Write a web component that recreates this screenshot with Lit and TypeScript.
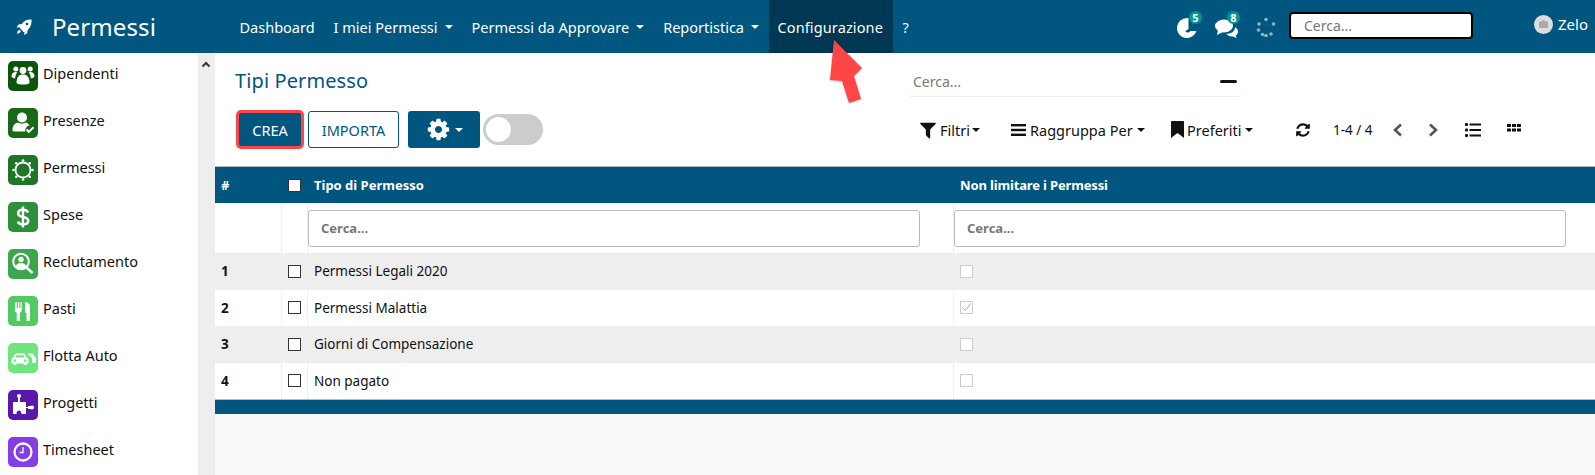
import { LitElement, html, css, svg } from "lit";
import { customElement } from "lit/decorators.js";

const FA = {
  cog: "M1152 896q0-106-75-181t-181-75-181 75-75 181 75 181 181 75 181-75 75-181zm512-109v222q0 12-8 23t-20 13l-185 28q-19 54-39 91 35 50 107 138 10 12 10 25t-9 23q-27 37-99 108t-94 71q-12 0-26-9l-138-108q-44 23-91 38-16 136-29 186-7 28-36 28h-222q-14 0-24.5-8.5t-11.5-21.5l-28-184q-49-16-90-37l-141 107q-10 9-25 9-14 0-25-11-126-114-165-168-7-10-7-23 0-12 8-23 15-21 51-66.5t54-70.5q-27-50-41-99l-183-27q-13-2-21-12.5t-8-23.5v-222q0-12 8-23t19-13l186-28q14-46 39-92-40-57-107-138-10-12-10-24 0-10 9-23 26-36 98.5-107.5t94.5-71.5q13 0 26 10l138 107q44-23 91-38 16-136 29-186 7-28 36-28h222q14 0 24.5 8.5t11.5 21.5l28 184q49 16 90 37l142-107q9-9 24-9 13 0 25 10 129 119 165 170 7 8 7 22 0 12-8 23-15 21-51 66.5t-54 70.5q26 50 41 98l183 28q13 2 21 12.5t8 23.5z",
  filter: "M1595 295q17 41-14 70l-493 493v742q0 42-39 59-13 5-25 5-27 0-45-19l-256-256q-19-19-19-45v-486l-493-493q-31-29-14-70 17-39 59-39h1280q42 0 59 39z",
  refresh: "M1639 1056q0 5-1 7-64 268-268 434.5t-478 166.5q-146 0-282.5-55t-243.5-157l-129 129q-19 19-45 19t-45-19-19-45v-448q0-26 19-45t45-19h448q26 0 45 19t19 45-19 45l-137 137q71 66 161 102t187 36q134 0 250-65t186-179q11-17 53-117 8-23 30-23h192q13 0 22.5 9.5t9.5 22.5zm25-800v448q0 26-19 45t-45 19h-448q-26 0-45-19t-19-45 19-45l138-138q-148-137-349-137-134 0-250 65t-186 179q-11 17-53 117-8 23-30 23h-199q-13 0-22.5-9.5t-9.5-22.5v-7q65-268 270-434.5t480-166.5q146 0 284 55.5t245 156.5l130-129q19-19 45-19t45 19 19 45z",
};

const fa = (d: string, size: number, cls = "") => html`<svg class=${cls} width=${size} height=${size} viewBox="0 0 1792 1792" fill="currentColor"><path d=${d}></path></svg>`;

const appIcons: Record<string, unknown> = {
  people: svg`<circle cx="15" cy="9.500" r="3.400"/><circle cx="7.800" cy="8" r="2.500"/><circle cx="22.200" cy="8" r="2.500"/><path d="M8.500 22c0-6 2.500-8.500 6.500-8.500s6.500 2.500 6.500 8.500c-2 2-11 2-13 0z"/><path d="M3.500 15.500c0-3 1.500-4.500 4-4.500 .8 0 1.500.3 2 .6-1.500 1.300-2.200 3-2.300 6-1.500-.2-2.900-1-3.700-2.100zM26.500 15.500c0-3-1.500-4.500-4-4.500-.8 0-1.500.3-2 .6 1.500 1.300 2.200 3 2.300 6 1.500-.2 2.900-1 3.700-2.100z"/>`,
  user: svg`<circle cx="14" cy="9.500" r="5"/><path d="M4.500 22.500c0-5 2-7 5-8 2.500 1.500 6 1.500 8.500 0 1.500.6 2.800 1.500 3.600 2.800-3 .6-4.600 3-4.600 6.200H7c-1.500 0-2.500-.4-2.500-1z"/><path d="M18.500 21.500l2.300 2.400 4.700-4.700" fill="none" stroke="#fff" stroke-width="2"/>`,
  sun: svg`<circle cx="15" cy="15" r="7.500" fill="none" stroke="#fff" stroke-width="1.800"/><g><circle cx="15" cy="5.500" r="1.300"/><circle cx="15" cy="24.500" r="1.300"/><circle cx="5.500" cy="15" r="1.300"/><circle cx="24.500" cy="15" r="1.300"/><circle cx="8.300" cy="8.300" r="1.300"/><circle cx="21.700" cy="8.300" r="1.300"/><circle cx="8.300" cy="21.700" r="1.300"/><circle cx="21.700" cy="21.700" r="1.300"/></g>`,
  dollar: svg`<path d="M20 10.500c-.8-1.800-2.600-2.700-5-2.700-2.900 0-4.800 1.400-4.800 3.600 0 5 10 2.400 10 7.400 0 2.300-2.100 3.600-5.100 3.600-2.600 0-4.500-1-5.300-3" fill="none" stroke="#fff" stroke-width="2.600"/><rect x="13.800" y="4.500" width="2.400" height="21"/>`,
  search: svg`<circle cx="13" cy="12.500" r="7.800" fill="none" stroke="#fff" stroke-width="2"/><circle cx="13" cy="10.500" r="2.700"/><path d="M7.800 17.500c.6-2.700 2.700-3.500 5.200-3.500s4.600.8 5.200 3.500c-2.600 2-7.800 2-10.400 0z"/><path d="M18.500 18.500l6 5.500" stroke="#fff" stroke-width="2.400" fill="none"/>`,
  cutlery: svg`<path d="M7.500 6h1.300v6h1.200V6h1.300v6h1.200V6h1.300v8c0 1.300-.9 2.300-2 2.700V25h-3V16.700c-1.100-.4-2-1.400-2-2.700z"/><path d="M17 6c3 0 5 2 5 5v14h-3.500v-8H17z"/>`,
  cars: svg`<path d="M3.500 20.500v-3.500c0-1.200.7-2 1.700-2.300l1.500-3c.4-.8 1-1.200 2-1.200h6.600c1 0 1.600.4 2 1.200l1.500 3c1 .3 1.700 1.100 1.700 2.300v3.500h-2v1.500h-2.800v-1.500H8.300v1.500H5.500v-1.500z"/><path d="M19.500 10.500h4.300c.8 0 1.300.3 1.700 1l1 2.300c.8.300 1.500 1 1.500 2v3.700h-1.500V20h-2.200v-3.500c0-2-1.200-3-2.300-3.300z"/><rect x="7.800" y="12.300" width="8.400" height="2.200" fill="var(--c)"/><circle cx="6.800" cy="17.500" r="1.200" fill="var(--c)"/><circle cx="17.200" cy="17.500" r="1.200" fill="var(--c)"/>`,
  puzzle: svg`<circle cx="11" cy="6" r="2"/><rect x="10" y="7" width="2" height="5"/><path d="M5 12h13v5h2v-1h3v3h-3v-1h-2v6h-4.500c0-2.500-1.200-3.500-2.500-3.500S8.500 21.500 8.500 24H5z"/><circle cx="24" cy="17.500" r="2"/>`,
  clock: svg`<circle cx="15" cy="15" r="8.500" fill="none" stroke="#fff" stroke-width="2.300"/><path d="M15 10v5.500h-3.500" fill="none" stroke="#fff" stroke-width="1.300"/>`,
};

const apps = [
  { name: "Dipendenti", color: "#0c540c", icon: "people" },
  { name: "Presenze", color: "#186a18", icon: "user" },
  { name: "Permessi", color: "#1f7528", icon: "sun" },
  { name: "Spese", color: "#2c8f39", icon: "dollar" },
  { name: "Reclutamento", color: "#3da64d", icon: "search" },
  { name: "Pasti", color: "#52ca63", icon: "cutlery" },
  { name: "Flotta Auto", color: "#6ee57f", icon: "cars" },
  { name: "Progetti", color: "#5619ab", icon: "puzzle" },
  { name: "Timesheet", color: "#863ce6", icon: "clock" },
];

const rows = [
  { n: 1, name: "Permessi Legali 2020", on: false },
  { n: 2, name: "Permessi Malattia", on: true },
  { n: 3, name: "Giorni di Compensazione", on: false },
  { n: 4, name: "Non pagato", on: false },
];

@customElement("app-root")
export class AppRoot extends LitElement {
  static styles = css`
    :host { display: block; width: 1595px; height: 475px; overflow: hidden; position: relative; font-family: "Noto Sans", "Liberation Sans", sans-serif; font-size: 14.5px; color: #111; background: #fff; }
    * { box-sizing: border-box; }
    svg { display: block; flex: none; }

    .top { height: 53px; background: #00567f; color: #fff; display: flex; align-items: stretch; position: relative; }
    .rocket { width: 52px; display: flex; align-items: center; padding-left: 16px; }
    .brand { font-size: 24px; width: 178px; display: flex; align-items: center; letter-spacing: .1px; }
    .nav { display: flex; align-items: stretch; }
    .nav a { display: flex; align-items: center; gap: 7px; padding: 0 9.500px; white-space: nowrap; }
    .nav a.active { background: #003752; letter-spacing: .12px; padding: 0 9.500px 0 9px; }
    .nav a.last { padding-left: 10px; }
    .caret { width: 0; height: 0; border-left: 4px solid transparent; border-right: 4px solid transparent; border-top: 4px solid currentColor; display: inline-block; flex: none; }
    .sys { margin-left: auto; display: flex; align-items: center; }
    .notify { position: relative; width: 22px; height: 22px; }
    .bubble { position: absolute; top: -7px; right: -3px; width: 13px; height: 13px; border-radius: 50%; background: #00968f; color: #fff; font-size: 11px; font-weight: 700; line-height: 13px; text-align: center; }
    .n1 { margin-right: 16px; margin-top: 5px; }
    .n2 { margin-right: 19px; margin-top: 5px; }
    .spin { margin-right: 13px; }
    .topsearch { width: 184px; height: 27px; border: 2px solid #000; border-radius: 4px; background: #fff; color: #777; font-size: 14px; padding-left: 13px; display: flex; align-items: center; margin-right: 61px; margin-top: -3px; }
    .avatar { width: 19px; height: 19px; border-radius: 50%; background: #ddd; display: flex; align-items: center; justify-content: center; margin-right: 5px; margin-top: -5px; }
    .who { width: 37px; margin-top: -5px; font-size: 15px; }

    .body { display: flex; height: 422px; }
    .side { width: 198px; padding: 8px 8px 0; display: flex; flex-direction: column; gap: 17px; overflow: hidden; }
    .app { display: flex; align-items: flex-start; gap: 5px; height: 30px; flex: none; }
    .tile { width: 30px; height: 30px; border-radius: 5px; flex: none; color: #fff; }
    .app span { line-height: 25px; }
    .track { width: 17px; background: #eee; padding: 8px 0 0 3px; color: #333; }

    .main { flex: 1; min-width: 0; background: #f9f9f9; display: flex; flex-direction: column; }
    .panel { background: #fff; height: 114px; display: grid; grid-template-columns: 693px 1fr; grid-template-rows: 53px 1fr; border-bottom: 1px solid #bbb; }
    .title { font-size: 20px; color: #00567f; padding: 14px 0 0 20px; letter-spacing: .1px; }
    .srch { margin-top: 14px; width: 334px; height: 30px; border-bottom: 1px solid #eee; border-radius: 0 0 4px 4px; color: #777; font-size: 14px; padding: 0 5px; display: flex; align-items: center; justify-content: space-between; }
    .minus { width: 17px; height: 3px; border-radius: 2px; background: #111; }
    .left { padding: 4px 0 0 21px; display: flex; align-items: flex-start; }
    .btn { display: flex; align-items: center; justify-content: center; border-radius: 3px; height: 37px; margin-top: 1px; }
    .crea { width: 68px; height: 39px; margin-top: 0; background: #00567f; color: #fff; border: 3px solid #ff4545; border-radius: 5px; margin-right: 4px; }
    .imp { width: 91px; background: #fff; color: #00567f; border: 1px solid #00567f; margin-right: 9px; }
    .gear { width: 72px; background: #00567f; color: #fff; gap: 4px; margin-right: 3px; }
    .toggle { width: 60px; height: 31px; border-radius: 16px; background: #ccc; margin-top: 4px; padding: 3px; }
    .toggle i { display: block; width: 25px; height: 25px; border-radius: 50%; background: #fff; }
    .right { display: flex; align-items: center; padding: 0 0 0 10px; height: 37px; margin-top: 5px; }
    .tool { display: flex; align-items: center; gap: 4px; white-space: nowrap; }
    .t1 { width: 93px; gap: 2px; } .t2 { width: 160px; } .t3 { width: 124px; gap: 3px; }
    .pager { width: 38px; }
    .count { width: 59px; font-size: 13.500px; }
    .ch1 { width: 36px; color: #555; }
    .ch2 { width: 37px; color: #555; }
    .vw { width: 42px; }

    .grid { display: grid; grid-template-columns: 66px 26px 646px 1fr; }
    .c { display: flex; align-items: center; padding-left: 7px; }
    .head { height: 36px; background: #00567f; color: #fff; font-weight: 700; font-size: 13px; }
    .head .c:first-child { padding-left: 6px; }
    .wide { letter-spacing: -.15px; }
    .filter { height: 50px; background: #fff; }
    .filter .c { border-left: 1px solid #eee; padding: 0; }
    .filter .c:first-child { border: 0; }
    .field { height: 37px; border: 1px solid #bbb; border-radius: 3px; background: #fff; color: #777; font-weight: 700; font-size: 13px; display: flex; align-items: center; padding-left: 12px; }
    .f1 { width: 612px; } .f2 { width: 612px; }
    .row { height: 36.500px; background: #fff; font-size: 13.500px; }
    .row .c { border-left: 1px solid #eee; padding-left: 6px; }
    .row .c:first-child { border: 0; font-weight: 700; padding-left: 6px; }
    .stripe .c { background: #eee; }
    .box { width: 13px; height: 13px; border: 1px solid #333; background: #fff; display: block; }
    .dis { border: 1px solid #ccc; display: flex; align-items: center; justify-content: center; }
    .foot { height: 15px; background: #00567f; border-top: 1px solid #bbb; }
    .arrow { position: absolute; left: 826px; top: 40px; filter: drop-shadow(0 1px 1px rgba(0,0,0,.2)); }
  `;

  render() {
    return html`
      <div class="top">
        <div class="rocket"><svg width="16" height="16" viewBox="0 0 16 16" fill="#fff"><path d="M15.500.6C11.300.4 8 1.800 5.700 5L2.600 5.500.5 8.500l3.300-.3 0 .9 3.800 3.800.9 0-.3 3.300 3-2.100.5-3.100C14.400 8.700 15.800 5 15.500.6zM11 6.300a1.300 1.300 0 1 1 0-2.600 1.300 1.300 0 0 1 0 2.600zM3.300 10.800c-1.300.8-2 2-2.300 3.900 1.900-.3 3.100-1 3.900-2.300z"/></svg></div>
        <div class="brand">Permessi</div>
        <div class="nav">
          <a>Dashboard</a>
          <a>I miei Permessi <i class="caret"></i></a>
          <a>Permessi da Approvare <i class="caret"></i></a>
          <a>Reportistica <i class="caret"></i></a>
          <a class="active">Configurazione</a>
          <a class="last">?</a>
        </div>
        <div class="sys">
          <div class="notify n1">
            <svg width="20" height="20" viewBox="0 0 20 20" fill="#fff"><path d="M10 0a10 10 0 1 0 9.500 13H13.500a3.500 3.500 0 0 1-3.500 1.500 2 2 0 0 1-1.500-1.500L11.500 11V0z"/></svg>
            <span class="bubble">5</span>
          </div>
          <div class="notify n2">
            <svg width="23" height="20" viewBox="0 0 23 20" fill="#fff"><ellipse cx="9" cy="8" rx="9" ry="6.500"/><path d="M3 12l-1 5 6-3z"/><path d="M11.500 15.800c4.500.2 8.500-2.500 8.500-6.500 2 1 3 2.500 3 4.200 0 2-1 3.300-2.300 4.200l1 2.300-4-1.500c-2.500.3-5-.8-6.200-2.700z"/></svg>
            <span class="bubble">8</span>
          </div>
          <svg class="spin" width="20" height="20" viewBox="0 0 20 20" fill="#8fb4c6"><circle cx="10" cy="2.500" r="1.800"/><circle cx="3" cy="7" r="1.800"/><circle cx="17.500" cy="7" r="1.800"/><circle cx="2.500" cy="13" r="1.800"/><circle cx="6.500" cy="17.500" r="1.800"/><circle cx="10" cy="18.500" r="1.800"/><circle cx="15" cy="17" r="1.800"/></svg>
          <div class="topsearch">Cerca...</div>
          <div class="avatar"><svg width="9" height="8" viewBox="0 0 9 8" fill="#aaa"><path d="M0 1.500h2.500L3.300.3h2.400l.8 1.200H9V8H0z"/></svg></div>
          <div class="who">Zelo</div>
        </div>
      </div>
      <div class="body">
        <div class="side">
          ${apps.map(a => html`<div class="app"><svg class="tile" viewBox="0 0 30 30" fill="#fff" style="background:${a.color};--c:${a.color}">${appIcons[a.icon]}</svg><span>${a.name}</span></div>`)}
        </div>
        <div class="track"><svg width="10" height="7" viewBox="0 0 10 7" fill="none" stroke="#333" stroke-width="2"><path d="M1.500 5.500L5 2l3.500 3.500"/></svg></div>
        <div class="main">
          <div class="panel">
            <div class="title">Tipi Permesso</div>
            <div><div class="srch"><span>Cerca...</span><i class="minus"></i></div></div>
            <div class="left">
              <div class="btn crea">CREA</div>
              <div class="btn imp">IMPORTA</div>
              <div class="btn gear">${fa(FA.cog, 25)}<i class="caret"></i></div>
              <div class="toggle"><i></i></div>
            </div>
            <div class="right">
              <div class="tool t1">${fa(FA.filter, 20)}<span>Filtri</span><i class="caret"></i></div>
              <div class="tool t2"><svg width="15" height="12" viewBox="0 0 15 12" fill="#111"><rect width="15" height="2.400"/><rect y="4.800" width="15" height="2.400"/><rect y="9.600" width="15" height="2.400"/></svg><span>Raggruppa Per</span><i class="caret"></i></div>
              <div class="tool t3"><svg width="13" height="17" viewBox="0 0 13 17" fill="#111"><path d="M0 1c0-.6.4-1 1-1h11c.6 0 1 .4 1 1v16l-6.500-5L0 17z"/></svg><span>Preferiti</span><i class="caret"></i></div>
              <div class="tool pager">${fa(FA.refresh, 16)}</div>
              <div class="tool count">1-4 / 4</div>
              <div class="tool ch1"><svg width="11" height="14" viewBox="0 0 11 14" fill="none" stroke="currentColor" stroke-width="2.600"><path d="M9 1.500L3 7l6 5.500"/></svg></div>
              <div class="tool ch2"><svg width="11" height="14" viewBox="0 0 11 14" fill="none" stroke="currentColor" stroke-width="2.600"><path d="M2 1.500L8 7l-6 5.500"/></svg></div>
              <div class="tool vw"><svg width="16" height="14" viewBox="0 0 16 14" fill="#111"><rect y="0" width="3" height="3" rx="1"/><rect y="5.500" width="3" height="3" rx="1"/><rect y="11" width="3" height="3" rx="1"/><rect x="4.500" y=".5" width="11.500" height="2"/><rect x="4.500" y="6" width="11.500" height="2"/><rect x="4.500" y="11.500" width="11.500" height="2"/></svg></div>
              <div class="tool"><svg width="14" height="13" viewBox="0 0 14 13" fill="#111"><rect y="1" width="4" height="3"/><rect x="5" y="1" width="4" height="3"/><rect x="10" y="1" width="4" height="3"/><rect y="5.500" width="4" height="3"/><rect x="5" y="5.500" width="4" height="3"/><rect x="10" y="5.500" width="4" height="3"/></svg></div>
            </div>
          </div>
          <div class="grid head">
            <div class="c">#</div>
            <div class="c"><i class="box"></i></div>
            <div class="c">Tipo di Permesso</div>
            <div class="c wide">Non limitare i Permessi</div>
          </div>
          <div class="grid filter">
            <div class="c"></div>
            <div class="c"></div>
            <div class="c"><div class="field f1">Cerca...</div></div>
            <div class="c"><div class="field f2">Cerca...</div></div>
          </div>
          ${rows.map(r => html`
            <div class="grid row ${r.n % 2 ? "stripe" : ""}">
              <div class="c">${r.n}</div>
              <div class="c"><i class="box"></i></div>
              <div class="c">${r.name}</div>
              <div class="c"><i class="box dis">${r.on ? html`<svg width="11" height="11" viewBox="0 0 11 11" fill="none" stroke="#aaa"><path d="M1.500 5.500l3 3 5-7"/></svg>` : ""}</i></div>
            </div>`)}
          <div class="foot"></div>
        </div>
      </div>
      <svg class="arrow" width="36" height="64" viewBox="0 0 36 64" fill="#ff4545"><path d="M8 0L36 28 28 36 35 59 23 63 16 41 4 40z"/></svg>
    `;
  }
}
